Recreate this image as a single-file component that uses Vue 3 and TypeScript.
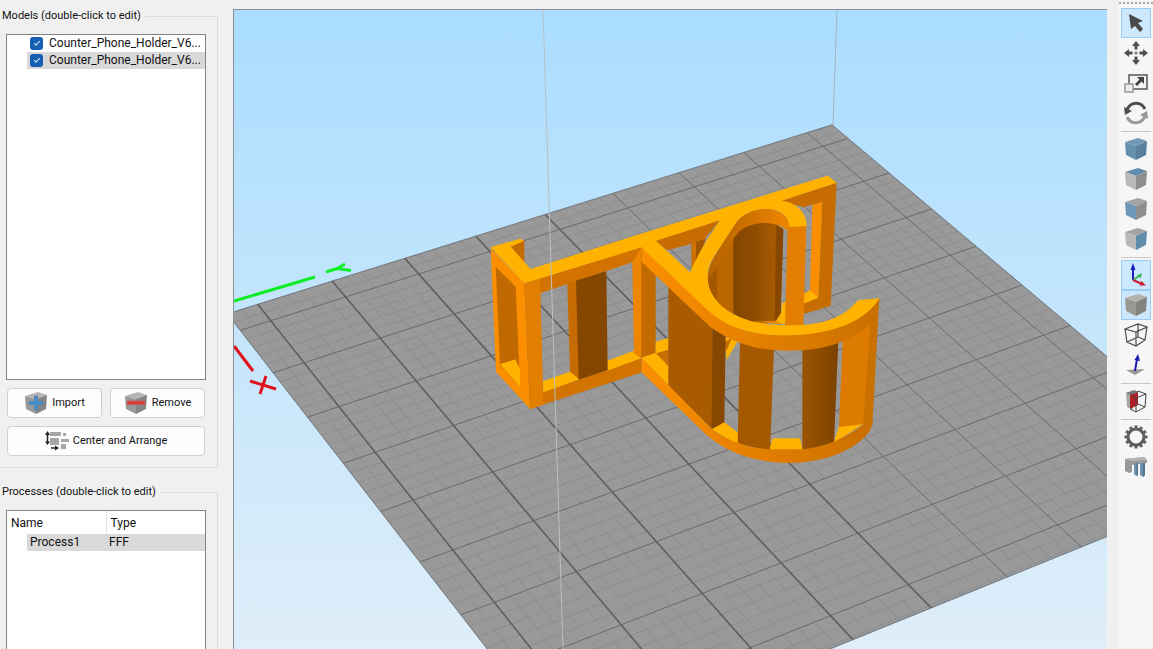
<script setup lang="ts">
import { ref } from 'vue'

type Point = [number, number]

/* ---- build plate, seen in perspective ---- */
// screen positions of four crossings of the 25 mm lines: (0,0) (8,0) (8,6) (0,6)
const corners: Point[] = [[270.7, 320.7], [823, 146.3], [1093.3, 377.7], [494.3, 602.3]]
const [[x0, y0], [x1, y1], [x2, y2], [x3, y3]] = corners
const dx1 = x1 - x2, dx2 = x3 - x2, sx = x0 - x1 + x2 - x3
const dy1 = y1 - y2, dy2 = y3 - y2, sy = y0 - y1 + y2 - y3
const den = dx1 * dy2 - dy1 * dx2
const g = (sx * dy2 - sy * dx2) / den
const h = (dx1 * sy - sx * dy1) / den

function project(u: number, v: number): string {
  const s = u / 8
  const t = v / 6
  const w = g * s + h * t + 1
  const x = ((x1 - x0 + g * x1) * s + (x3 - x0 + h * x3) * t + x0) / w
  const y = ((y1 - y0 + g * y1) * s + (y3 - y0 + h * y3) * t + y0) / w
  return `${x.toFixed(2)} ${y.toFixed(2)}`
}

const LO = -0.4
const HI = 8.4
const FRONT = 8.44
const along = (u: number) => `M${project(u, LO)}L${project(u, FRONT)}`
const across = (v: number) => `M${project(LO, v)}L${project(HI, v)}`

const plate = `M${project(LO, LO)}L${project(HI, LO)}L${project(HI, FRONT)}L${project(LO, FRONT)}Z`
let minor = ''
for (let i = -2; i <= 42; i++) {
  if (i % 5 !== 0) minor += along(i / 5) + across(i / 5)
}
let acrossMajor = ''
let nearMajor = ''
let farMajor = ''
for (let i = 0; i <= 8; i++) {
  acrossMajor += across(i)
  if (i < 5) nearMajor += along(i)
  else farMajor += along(i)
}

/* ---- side panel ---- */
const models = ref([
  { id: 1, name: 'Counter_Phone_Holder_V6...', on: true, selected: false },
  { id: 2, name: 'Counter_Phone_Holder_V6...', on: true, selected: true },
])
const processes = [{ name: 'Process1', type: 'FFF' }]

/* ---- toolbar ---- */
interface Tool { id: string; label: string; top?: string; left?: string; right?: string }
const grey = { top: '#a3a3a3', left: '#b9b9b9', right: '#8e8e8e' }
const groups: Tool[][] = [
  [
    { id: 'select', label: 'Select' },
    { id: 'move', label: 'Move' },
    { id: 'scale', label: 'Scale' },
    { id: 'rotate', label: 'Rotate' },
  ],
  [
    { id: 'iso', label: 'Default view', top: '#7298b4', left: '#6790ae', right: '#58809d' },
    { id: 'top', label: 'Top view', ...grey, top: '#5f8cab' },
    { id: 'front', label: 'Front view', ...grey, left: '#6d98b7' },
    { id: 'side', label: 'Side view', ...grey, right: '#5f8cab' },
  ],
  [
    { id: 'axes', label: 'Show axes' },
    { id: 'solid', label: 'Solid model', top: '#b3b2ae', left: '#999893', right: '#83827e' },
    { id: 'wire', label: 'Wireframe' },
    { id: 'normals', label: 'Show normals' },
  ],
  [{ id: 'section', label: 'Cross section' }],
  [
    { id: 'settings', label: 'Machine settings' },
    { id: 'supports', label: 'Supports' },
  ],
]
const active = ref(['select', 'axes', 'solid'])
const teeth = Array.from({ length: 12 }, (_, i) => i * 30)
</script>

<template>
  <div class="app">
    <aside class="side">
      <fieldset class="box">
        <legend>Models (double-click to edit)</legend>
        <ul class="list">
          <li v-for="m in models" :key="m.id" :class="{ selected: m.selected }">
            <label><input v-model="m.on" type="checkbox" />{{ m.name }}</label>
          </li>
        </ul>
        <div class="actions">
          <button type="button">
            <svg width="24" height="24" viewBox="0 0 24 24" aria-hidden="true">
              <path d="M1 5 14 1 23 4 12 8Z" fill="#b5b5b5" /><path d="M1 5 12 8V23L2 18Z" fill="#999" /><path d="M12 8 23 4 22 18 12 23Z" fill="#858585" />
              <path d="M10.500 5h3V10.500H19v3h-5.500V19h-3v-5.500H5v-3h5.500Z" fill="#3e8ed0" stroke="#5a86ad" />
            </svg>
            <span>Import</span>
          </button>
          <button type="button">
            <svg width="24" height="24" viewBox="0 0 24 24" aria-hidden="true">
              <path d="M1 5 14 1 23 4 12 8Z" fill="#b5b5b5" /><path d="M1 5 12 8V23L2 18Z" fill="#999" /><path d="M12 8 23 4 22 18 12 23Z" fill="#858585" />
              <path d="M3 10H21V13.500H3Z" fill="#e2383a" stroke="#b86060" />
            </svg>
            <span>Remove</span>
          </button>
          <button type="button" class="wide">
            <svg width="24" height="20" viewBox="0 0 24 20" aria-hidden="true">
              <path d="M5 1h11v4H5ZM18 2h3v3h-3ZM5 7h9v7H5ZM16 8h8v3h-8ZM16 13h5v5h-5Z" fill="#a6a6a6" />
              <path d="M2.500 3v9M6 17h6" stroke="#222" stroke-width="1.500" />
              <path d="M2.500 0 5 4H0ZM2.500 14 0 10.500H5ZM14 17l-4-2.500v5Z" fill="#222" />
            </svg>
            <span>Center and Arrange</span>
          </button>
        </div>
      </fieldset>

      <fieldset class="box processes">
        <legend>Processes (double-click to edit)</legend>
        <div class="sheet">
          <table>
            <thead>
              <tr><th scope="col">Name</th><th scope="col">Type</th></tr>
            </thead>
            <tbody>
              <tr v-for="p in processes" :key="p.name"><td><span>{{ p.name }}</span></td><td>{{ p.type }}</td></tr>
            </tbody>
          </table>
        </div>
      </fieldset>
    </aside>

    <main class="view">
      <svg class="scene" viewBox="234 10 873 639" preserveAspectRatio="xMinYMin slice" role="img" aria-label="Phone holder on the build plate">
        <defs>
          <linearGradient id="sky" x1="0" y1="0" x2="0" y2="1">
            <stop offset="0" stop-color="#aaddff" /><stop offset="1" stop-color="#dfeef9" />
          </linearGradient>
          <linearGradient id="hollow" x1="0" y1="0" x2="1" y2="0">
            <stop offset="0" stop-color="#824500" /><stop offset=".35" stop-color="#8c4b00" /><stop offset="1" stop-color="#ae5f00" />
          </linearGradient>
          <linearGradient id="rib" x1="0" y1="0" x2="1" y2="0">
            <stop offset="0" stop-color="#9c5400" /><stop offset="1" stop-color="#7c4200" />
          </linearGradient>
          <linearGradient id="band" x1="0" y1="0" x2="1" y2="0">
            <stop offset="0" stop-color="#fa8f00" /><stop offset=".3" stop-color="#ee8500" /><stop offset=".65" stop-color="#dc7b00" /><stop offset="1" stop-color="#c86f00" />
          </linearGradient>
          <linearGradient id="lip" x1="0" y1="0" x2="1" y2="0">
            <stop offset="0" stop-color="#b76400" /><stop offset=".45" stop-color="#cb7000" /><stop offset="1" stop-color="#f08600" />
          </linearGradient>
        </defs>
        <rect x="234" y="10" width="873" height="639" fill="url(#sky)" />

        <path :d="plate" fill="#999" stroke="#6d7780" />
        <path :d="minor" class="minor" />
        <path :d="acrossMajor" class="major" />
        <path :d="farMajor" class="major" />
        <path :d="nearMajor" class="major near" />

        <path d="M234 301 315 277" stroke="#0cee24" stroke-width="3" />
        <path d="M326 272 337 268.500 351 270.500M337 268.500 345 264" class="mark" stroke="#0cee24" />
        <path d="M234 346 253 371" stroke="#e0101c" stroke-width="3" />
        <path d="M250 381 276 389M266 376 260 394" class="mark" stroke="#e0101c" />

        <path d="M837 10 833 125" stroke="#a4b4be" />

        <!-- model, drawn at a third of a pixel per unit -->
        <g transform="translate(480 170) scale(.333333)">
          <!-- frame at the left end -->
          <path d="M92 228 133 212V285Z" fill="#c46b00" />
          <path d="M32 235 133 340 150 717 48 605Z" fill="#fb8f00" />
          <path d="M47 290 107 350 120 650 60 585Z" fill="#c06900" />
          <path d="M60 583 106 568 120 598V650Z" fill="#ffb300" />

          <!-- long wall -->
          <path fill-rule="evenodd" d="M133 340 485 230V607L150 717ZM180 370 188 665 383 600 487 563 457 277Z" fill="#d27300" />
          <path d="M133 340 180 325 190 704 150 717Z" fill="#e27e00" />
          <path d="M189 634 275 603 298 628 190 667ZM382 572 465 541 487 563 382 602Z" fill="#ffb300" />
          <path d="M262 340 290 330 298 628 270 605Z" fill="#c66c00" />
          <path d="M288 332 379 304 383 600 296 629Z" fill="#854600" />
          <path d="M457 278 485 230V566L462 550Z" fill="#ee8500" />
          <path d="M484 232 527 280V550L484 565Z" fill="#c26a00" />

          <g transform="translate(480 0)">
            <!-- right end of the wall -->
            <path d="M425 92 590 38 572 407 492 432V400L535 383 547 95 490 112Z" fill="#c66c00" />
            <path d="M517 104 547 95 535 384 510 366Z" fill="#f98e00" />
            <path d="M490 372 509 361 535 383 490 401Z" fill="#ffb300" />
            <!-- wall seen through the triangle -->
            <path d="M45 212 240 150 190 212 82 241Z" fill="#c66c00" />
            <path d="M155 220 198 206 172 275 155 296Z" fill="#a05600" />
            <path d="M155 220 168 216V278L155 296Z" fill="#ce7200" />

            <!-- inside of the hook -->
            <path d="M255 500 292 515 260 570ZM400 455 424 425 426 400 440 394V462H400Z" fill="#ffb300" />
            <path d="M255 515 275 505 263 535 256 540Z" fill="#c66c00" />
            <path d="M203 320 232 285V395L205 370Z" fill="#a25700" />
            <path d="M230 290 288 190 280 432 230 402Z" fill="#b96500" />
            <path d="M280 200 295 160 340 135H410V165L430 180 422 430 404 458 340 462 280 432Z" fill="url(#hollow)" />
            <path d="M408 163 430 178 422 430 404 458Z" fill="#874700" />
            <path d="M340 455 404 452 425 462Z" fill="#e98200" />
            <path d="M203 330C203 290 220 265 240 232L290 155C312 127 350 115 385 117 425 122 448 142 448 168L440 180C420 165 400 159 370 159 325 162 300 175 280 208L232 292Z" fill="url(#lip)" />
            <path d="M443 168H499L490 466H435Z" fill="#e37e00" />

            <!-- pieces under the front rim -->
            <path d="M47 515 86 503V545L47 550ZM4 563 48 548 86 585V648Z" fill="#ffb300" />
            <path d="M48 550 85 539V588Z" fill="#c66c00" />
            <path d="M85 345 217 470V778L85 648Z" fill="#a85b00" />
            <path d="M217 470 257 495 253 760 215 778Z" fill="#874700" />
            <path d="M215 778 253 757 295 788V825ZM398 805H480L490 845H385ZM597 769 675 759 580 820Z" fill="#ffb300" />
            <path d="M300 515 402 535 390 845 293 820Z" fill="#a45800" />
            <path d="M487 540 595 512 582 820 487 845Z" fill="url(#rib)" />
            <path d="M608 512 697 455 672 762 597 771Z" fill="#dd7a00" />
            <path d="M693 440 718 385 697 765 668 790Z" fill="#c87000" />
            <path d="M5 564 215 777Q290 832 390 838H487C555 832 625 800 672 762L697 745V765C675 830 560 880 445 879 330 878 240 835 190 785L5 607Z" fill="url(#band)" />

            <!-- rim -->
            <path d="M5 228 200 415C280 490 360 495 440 494 560 492 660 465 718 385L712 440 690 462C630 520 540 543 440 542 350 541 280 520 210 470L5 275Z" fill="url(#band)" />
            <path fill-rule="evenodd" d="M-448 232-360 206-347 212-388 230-328 297 0 192 563 17 590 38 425 92C465 96 500 125 500 168L447 171C450 142 425 120 385 117 350 115 312 127 290 155L240 232C215 268 203 290 203 320 203 390 270 440 350 457 460 475 580 470 640 405L655 391 718 385C675 460 560 496 440 496 350 496 270 482 200 418L5 232-347 340ZM48 212 240 151C205 200 175 250 150 307Z" fill="#ffb300" />
          </g>
        </g>
        <path d="M543 10 563 649" stroke="#b9c0c3" />
      </svg>
    </main>

    <nav class="tools" aria-label="View tools">
      <div v-for="(group, n) in groups" :key="n" class="group">
        <button v-for="t in group" :key="t.id" type="button" :aria-label="t.label" :class="{ active: active.includes(t.id) }">
          <svg width="24" height="24" viewBox="0 0 24 24" fill="none" aria-hidden="true">
            <path v-if="t.id === 'select'" d="M5 3 19 10 14 12 19 18 16 21 11 15 7 18Z" fill="#484848" />
            <g v-else-if="t.id === 'move'" fill="#505050">
              <path d="M12 0 16 5H13.500V8.500H10.500V5H8ZM12 24 8 19H10.500V15.500H13.500V19H16ZM0 12 5 8V10.500H8.500V13.500H5V16ZM24 12 19 16V13.500H15.500V10.500H19V8Z" /><path d="M10.500 10.500h3v3h-3Z" fill="#888" />
            </g>
            <g v-else-if="t.id === 'scale'">
              <path d="M5 4H23V18H5Z" fill="#f4f4f4" stroke="#555" stroke-width="1.500" /><path d="M1 13H9V21H1Z" fill="#ededed" stroke="#999" stroke-width="1.500" />
              <path d="M20 6V13L17.500 10.500 13 15 11 13 15.500 8.500 13 6Z" fill="#444" />
            </g>
            <g v-else-if="t.id === 'rotate'" stroke-width="3">
              <path d="M2.500 10C6 0 17 0 21 8" stroke="#4d4d4d" /><path d="M21.500 14C18 24 7 24 3 16" stroke="#999" />
              <path d="M0 6 1 14 8 10Z" fill="#4d4d4d" /><path d="M24 18 23 10 16 14Z" fill="#999" />
            </g>
            <g v-else-if="t.top">
              <path d="M1 5 14 1 23 4 12 9Z" :fill="t.top" /><path d="M1 5 12 9V23L2 18Z" :fill="t.left" /><path d="M12 9 23 4 22 18 12 23Z" :fill="t.right" />
            </g>
            <g v-else-if="t.id === 'axes'" stroke-width="2">
              <path d="M9 17V5" stroke="#1c1cc0" /><path d="M9 0 11.500 7H6.500Z" fill="#1c1cc0" />
              <path d="M9 17 15 13" stroke="#30b850" /><path d="M18 10.500 16.500 15.500 13.500 12Z" fill="#30b850" />
              <path d="M9 17 17 20.500" stroke="#cc1c34" /><path d="M22 22.500 15.500 22.500 17.500 18Z" fill="#cc1c34" />
            </g>
            <path v-else-if="t.id === 'wire'" d="M1 6 14 1 23 4 12 9ZM1 6 3 19 12 23 21 17 23 4M12 9V23M14 1V14L3 19M14 14 21 17" stroke="#4c4c4c" stroke-width="1.200" />
            <g v-else-if="t.id === 'normals'">
              <path d="M2 17 21 16 11 22Z" fill="#999" /><path d="M11 18 13 6" stroke="#1c1cb0" stroke-width="2" /><path d="M14 1 16 8 10.500 7Z" fill="#1c1cb0" />
            </g>
            <g v-else-if="t.id === 'section'">
              <path d="M2 4 9 2V21L3 18Z" fill="#a8a8a8" /><path d="M6 4 14 2V16L6 20Z" fill="#b02028" /><path d="M2 4 10 1 15 3 7 6Z" fill="#777" />
              <path d="M14 2 22 5 12 9 7 5M12 9V23L21 18 22 5M12 23 6 20M14 15 21 18" stroke="#444" />
            </g>
            <g v-else-if="t.id === 'settings'">
              <circle cx="12" cy="12" r="8" stroke="#5e5e5e" stroke-width="3" />
              <path v-for="a in teeth" :key="a" d="M10.500 0.500H13.500V4H10.500Z" fill="#5e5e5e" :transform="`rotate(${a} 12 12)`" />
            </g>
            <g v-else>
              <path d="M1 4 20 2 23 5V8L8 10V17L5 18 1 16Z" fill="#999" /><path d="M1 4 20 2 23 5 8 6Z" fill="#b5b5b5" />
              <path d="M10 8H14V20L12 21 10 19ZM16 8H21V20L19 22 16 20Z" fill="#6e92ad" /><path d="M12.500 8H14V20L12.500 21ZM19 8H21V20L19 22Z" fill="#517791" />
            </g>
          </svg>
        </button>
      </div>
    </nav>
  </div>
</template>

<style>
body {
  margin: 0;
  background: #f0f0f0;
}
</style>

<style scoped>
.app {
  display: flex;
  height: 100vh;
  overflow: hidden;
  background: #f0f0f0;
  color: #111;
  font: 11px/16px Roboto, "Noto Sans", sans-serif;
}
button {
  font: inherit;
  color: inherit;
}
.side {
  flex: none;
  width: 218px;
  padding-top: 8px;
  box-sizing: border-box;
}
.box {
  min-width: 0;
  margin: 0;
  padding: 10px 11px 11px 0;
  border: 1px solid #dcdcdc;
  border-left: 0;
}
.box legend {
  padding: 0 4px 0 2px;
}
.list {
  height: 344px;
  margin: 0 0 0 6px;
  padding: 0;
  list-style: none;
  background: #fff;
  border: 1px solid #828282;
}
.list li {
  margin-left: 20px;
  padding-left: 3px;
  font-size: 12px;
  line-height: 17px;
}
.list .selected,
td span,
td + td {
  background: #d9d9d9;
}
.list label {
  display: flex;
  align-items: center;
  gap: 6px;
  white-space: nowrap;
}
.list input {
  appearance: none;
  display: grid;
  place-items: center;
  flex: none;
  width: 13px;
  height: 13px;
  margin: 0;
  border-radius: 3px;
  background: #155fb0;
}
.list input:checked::after {
  content: "";
  width: 5px;
  height: 2px;
  margin-bottom: 2px;
  border: solid #d9ecff;
  border-width: 0 0 1px 1px;
  transform: rotate(-45deg);
}
.actions {
  display: grid;
  grid-template-columns: 1fr 1fr;
  gap: 8px;
  margin: 8px 1px 0 7px;
}
.actions button {
  display: flex;
  align-items: center;
  justify-content: center;
  gap: 4px;
  height: 30px;
  padding: 0;
  background: #fdfdfd;
  border: 1px solid #d0d0d0;
  border-radius: 4px;
}
.actions .wide {
  grid-column: 1 / 3;
}
.processes {
  margin-top: 16px;
}
.sheet {
  height: 300px;
  margin-left: 6px;
  background: #fff;
  border: 1px solid #828282;
}
table {
  width: 100%;
  border-collapse: collapse;
  table-layout: fixed;
  font-size: 12px;
}
th {
  height: 23px;
  padding: 0 4px;
  text-align: left;
  font-weight: 400;
}
th + th {
  border-left: 1px solid #e2e2e2;
}
td {
  height: 17px;
  padding: 0 3px;
  line-height: 17px;
}
td:first-child {
  padding: 0 0 0 20px;
}
td span {
  display: block;
  padding-left: 3px;
}
.view {
  flex: 1;
  min-width: 0;
  margin: 9px 12px 0 15px;
  border: solid #8b9297;
  border-width: 1px 0 0 1px;
}
.scene {
  display: block;
  width: 100%;
  height: 100%;
}
.minor {
  fill: none;
  stroke: #848484;
  stroke-width: 0.7px;
  stroke-opacity: 0.8;
}
.major {
  fill: none;
  stroke: #6a6a6a;
}
.near {
  stroke: #5f5f5f;
  stroke-width: 1.600px;
}
.mark {
  fill: none;
  stroke-width: 3px;
}
.tools {
  flex: none;
  width: 34px;
  box-sizing: border-box;
  padding: 8px 2px 0 2px;
  background: radial-gradient(circle, #aaa 1px, transparent 1px) 3px 1px / 4px 4px repeat-x, #f6f6f6;
}
.group + .group {
  border-top: 1px solid #c8c8c8;
  margin-top: 3px;
  padding-top: 2px;
}
.tools button {
  display: grid;
  place-items: center;
  width: 100%;
  height: 30px;
  padding: 0;
  background: transparent;
  border: 1px solid transparent;
}
.tools .active {
  background: #cce8ff;
  border-color: #99cdf5;
}
</style>
